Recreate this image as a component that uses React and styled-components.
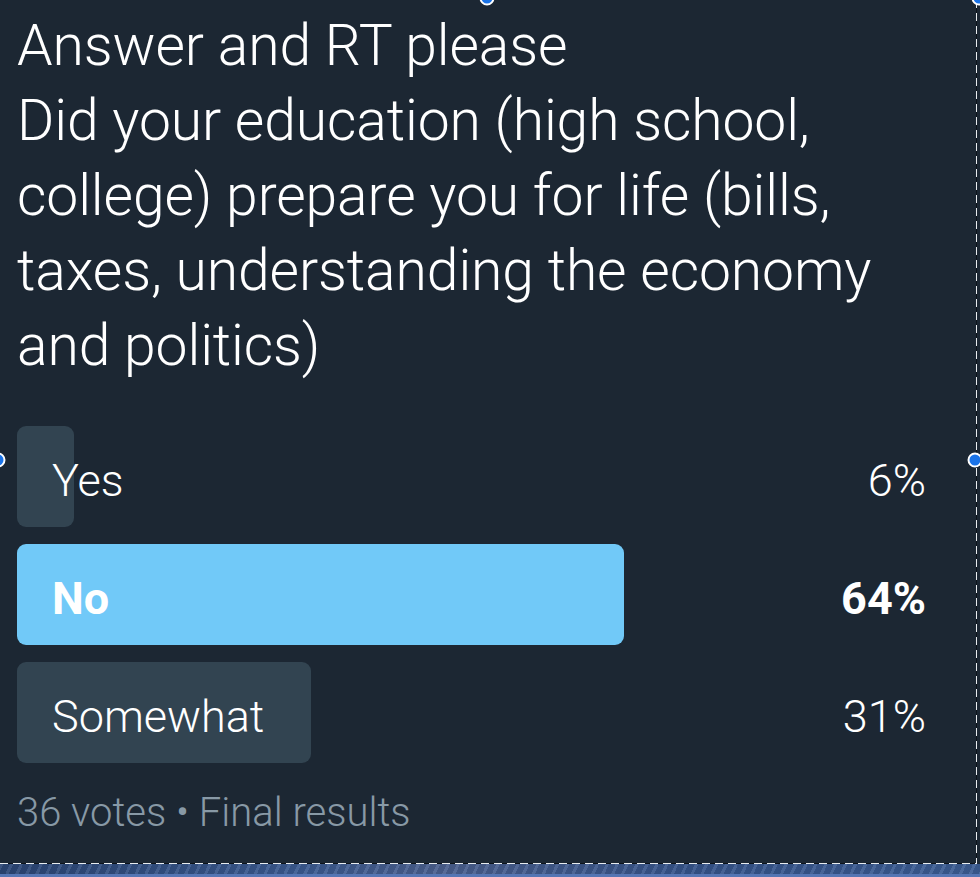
import React from "react";
import styled, { createGlobalStyle } from "styled-components";

const Global = createGlobalStyle`
  html, body { margin: 0; padding: 0; background: #1c2733; }
  body { width: 980px; height: 877px; overflow: hidden; font-family: Roboto, "Noto Sans", sans-serif; }
`;

const Screen = styled.div`
  width: 980px;
  height: 877px;
  display: flex;
  flex-direction: column;
  background: #1c2733;
`;

const Frame = styled.div`
  position: relative;
  width: 977px;
  height: 864px;
  box-sizing: border-box;
  padding: 8px 0 0 17px;
  background-color: #1c2733;
  background-image:
    repeating-linear-gradient(to bottom, #e8ecef 0 8px, #0d141b 8px 13px),
    repeating-linear-gradient(to right, #e8ecef 0 8px, #0d141b 8px 13px);
  background-size: 1px 100%, 100% 1px;
  background-position: right top, left bottom;
  background-repeat: no-repeat;
  display: flex;
  flex-direction: column;
`;

const Question = styled.div`
  color: #ffffff;
  font-size: 57px;
  font-weight: 300;
  line-height: 75px;
  letter-spacing: -0.1px;
  white-space: pre-line;
`;

const Options = styled.div`
  margin-top: 43px;
  width: 948px;
  display: flex;
  flex-direction: column;
  gap: 17px;
`;

const Row = styled.div`
  position: relative;
  height: 101px;
  box-sizing: border-box;
  display: flex;
  align-items: center;
  justify-content: space-between;
  padding: 7px 39px 0 35px;
  color: #ffffff;
  font-size: 45px;
  font-weight: ${(p) => (p.$winner ? 700 : 300)};
`;

const Fill = styled.div`
  position: absolute;
  left: 0;
  top: 0;
  bottom: 0;
  border-radius: 9px;
  background: ${(p) => (p.$winner ? "#71c9f8" : "#324451")};
`;

const Label = styled.span`
  position: relative;
`;

const Pct = styled.span`
  position: relative;
`;

const Footer = styled.div`
  margin-top: 26px;
  color: #8899a6;
  font-size: 40px;
  font-weight: 300;
  line-height: 48px;
`;

const Handle = styled.div`
  position: absolute;
  width: 11px;
  height: 11px;
  border-radius: 50%;
  background: #1a73e8;
  border: 2px solid #ffffff;
  left: ${(p) => p.$x}px;
  top: ${(p) => p.$y}px;
  transform: translate(-50%, -50%);
`;

const Strip = styled.div`
  flex: 1;
  display: flex;
  flex-direction: column;
`;

const Texture = styled.div`
  height: 10px;
  background:
    repeating-linear-gradient(115deg, rgba(255,255,255,0.08) 0 3px, rgba(0,0,0,0.08) 3px 9px),
    linear-gradient(to right, #2b4675, #3a5a90 30%, #4a5f8e 45%, #35548a 70%, #3c5d94);
`;

const Band = styled.div`
  flex: 1;
  background: #5576b4;
`;

const options = [
  { label: "Yes", pct: 6 },
  { label: "No", pct: 64, winner: true },
  { label: "Somewhat", pct: 31 },
];

export default function App() {
  return (
    <Screen>
      <Global />
      <Frame>
        <Question>
          {"Answer and RT please\nDid your education (high school,\ncollege) prepare you for life (bills,\ntaxes, understanding the economy\nand politics)"}
        </Question>
        <Options>
          {options.map((o) => (
            <Row key={o.label} $winner={o.winner}>
              <Fill $winner={o.winner} style={{ width: `${(o.pct * 948) / 100}px` }} />
              <Label>{o.label}</Label>
              <Pct>{o.pct}%</Pct>
            </Row>
          ))}
        </Options>
        <Footer>36 votes • Final results</Footer>
        <Handle $x={487} $y={-2} />
        <Handle $x={979} $y={-2} />
        <Handle $x={-2} $y={460} />
        <Handle $x={975} $y={460} />
      </Frame>
      <Strip>
        <Texture />
        <Band />
      </Strip>
    </Screen>
  );
}
